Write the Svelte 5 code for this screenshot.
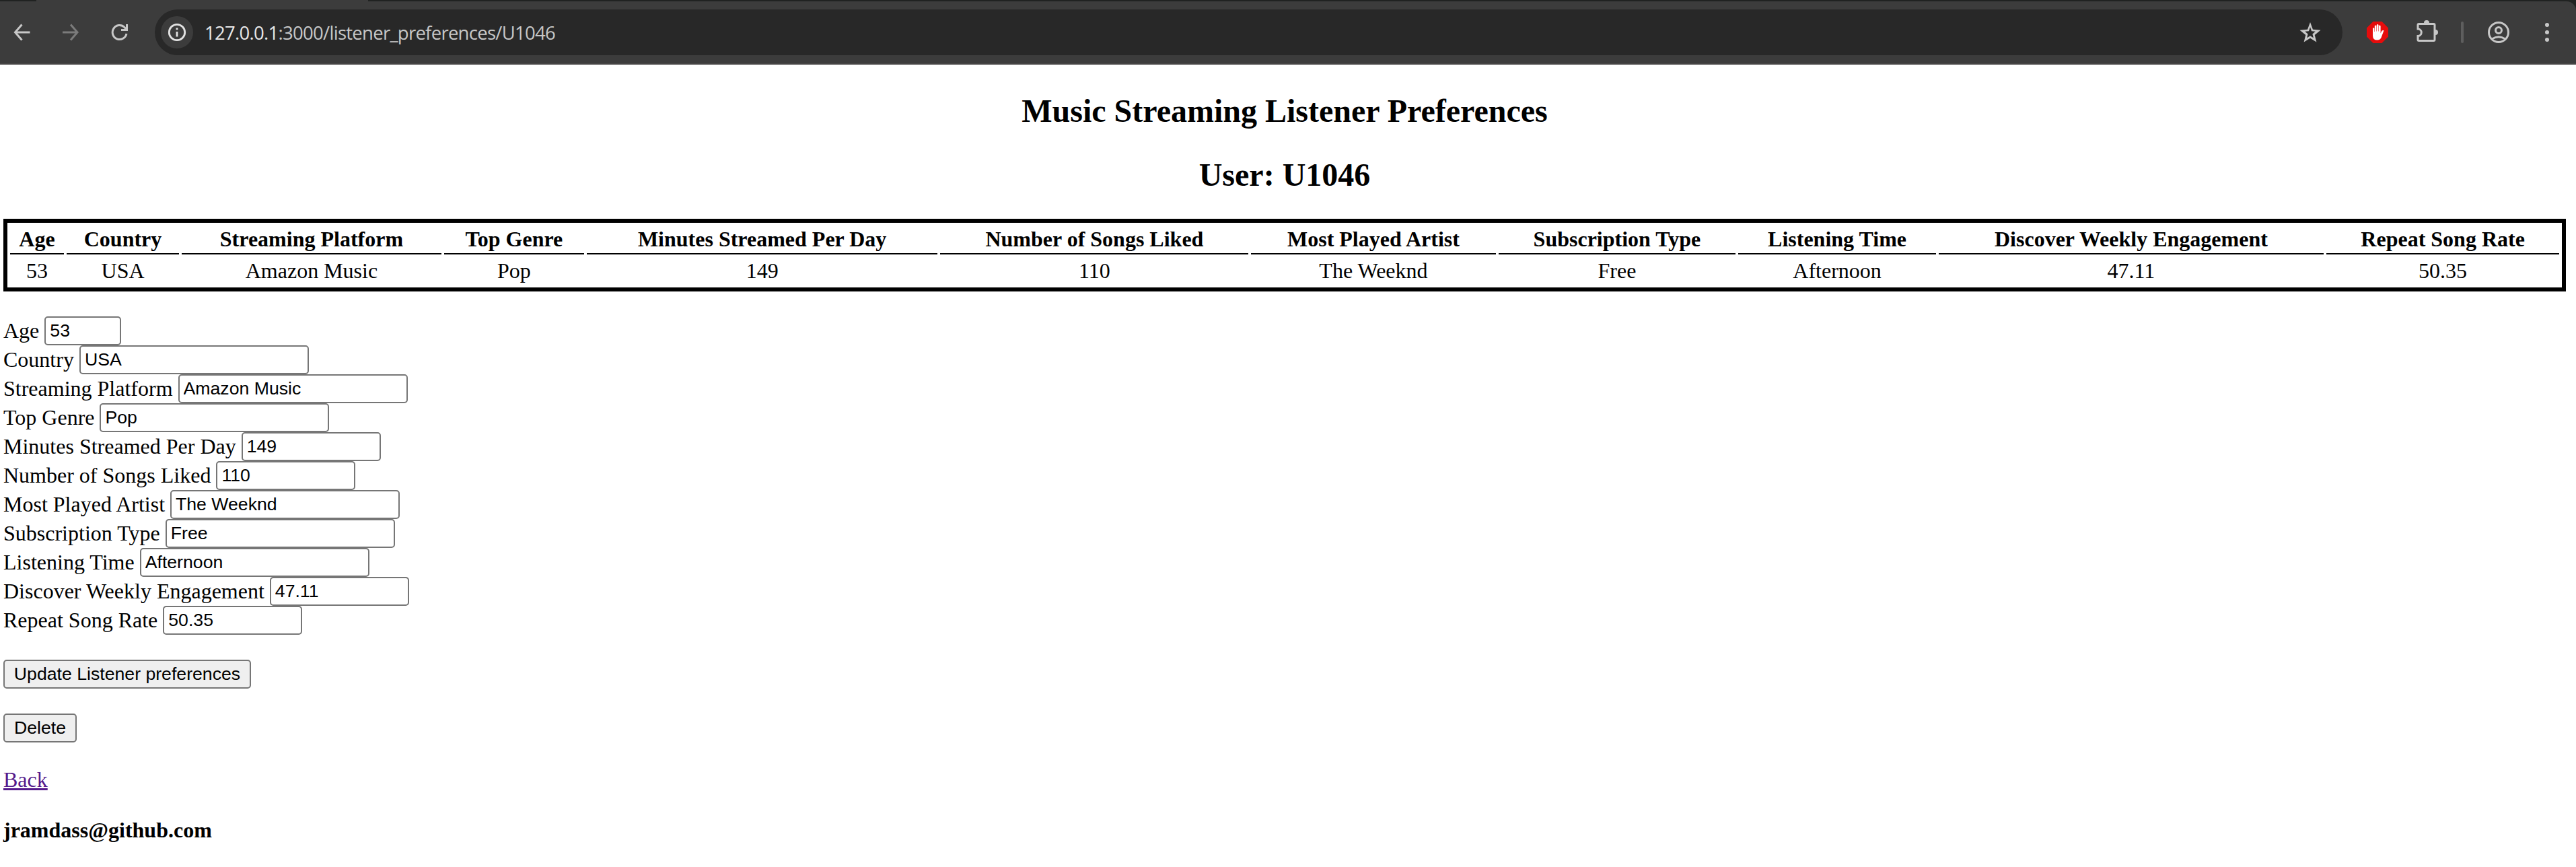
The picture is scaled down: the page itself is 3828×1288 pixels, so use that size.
<script lang="ts">
  const columns = [
    { label: 'Age', value: '53', kind: 'short' },
    { label: 'Country', value: 'USA', kind: 'text' },
    { label: 'Streaming Platform', value: 'Amazon Music', kind: 'text' },
    { label: 'Top Genre', value: 'Pop', kind: 'text' },
    { label: 'Minutes Streamed Per Day', value: '149', kind: 'number' },
    { label: 'Number of Songs Liked', value: '110', kind: 'number' },
    { label: 'Most Played Artist', value: 'The Weeknd', kind: 'text' },
    { label: 'Subscription Type', value: 'Free', kind: 'text' },
    { label: 'Listening Time', value: 'Afternoon', kind: 'text' },
    { label: 'Discover Weekly Engagement', value: '47.11', kind: 'number' },
    { label: 'Repeat Song Rate', value: '50.35', kind: 'number' },
  ];
</script>

<div class="strip">
  <div class="tab"></div>
  <header class="toolbar">
    <nav class="nav">
      <svg class="icon" viewBox="0 0 32 32"><path d="M28.500 16H6.500M16.500 4.500L6.500 16L16.500 27.500" /></svg>
      <svg class="icon dim" viewBox="0 0 32 32"><path d="M5 16H27M17 4.500L27 16L17 27.500" /></svg>
      <svg class="icon" viewBox="0 0 32 32"><path d="M28 18A10.500 10.500 0 1 1 25 8.500L28 12M28.500 4V12.500H20" /></svg>
    </nav>
    <div class="omnibox">
      <span class="info">
        <svg viewBox="0 0 32 32"><circle cx="16" cy="16" r="11.700" /><path d="M16 15V22.500M16 9.500V12.300" /></svg>
      </span>
      <span class="url"><b>127.0.0.1</b>:3000/listener_preferences/U1046</span>
      <svg class="star" viewBox="0 0 32 32"><path fill-rule="evenodd" d="M16 0L20.100 11L32 12L22.900 19.600L25.700 30.500L16 24.400L6.300 30.500L9.100 19.600L0 12L11.900 11ZM16 7.500L13.900 13.600L8 14.100L12.500 18L11 24L16 20.800L21 24L19.500 18L24 14.100L18.100 13.600Z" /></svg>
    </div>
    <svg class="ext" viewBox="0 0 32 32">
      <path fill="#e60c0c" d="M9.500 0H22.500L32 9.500V22.500L22.500 32H9.500L0 22.500V9.500Z" />
      <path fill="#fff" d="M9 10.200Q10.200 8.400 11.300 10.200V15H11.800V6.500Q13 4.600 14.300 6.500V14.500H14.800V5Q16.200 3 17.500 5V14.500H18V6.500Q19.300 4.600 20.600 6.500V17.500L22.300 14Q23.800 12.300 25.500 13.300L21.500 24Q19.800 27.600 15.500 27.600Q9 27.600 9 21Z" />
    </svg>
    <svg class="puzzle" viewBox="0 0 34 34">
      <path class="line" d="M4.500 5.500H26.500Q28 5.500 28 7V29Q28 30.500 26.500 30.500H4.500Q3 30.500 3 29V23.500A4.800 4.800 0 0 0 3 13V7Q3 5.500 4.500 5.500Z" />
      <path class="solid" d="M12 4A4 4 0 0 1 20 4ZM29 14A4 4 0 0 1 29 22Z" />
    </svg>
    <span class="rule"></span>
    <svg class="profile" viewBox="0 0 32 32"><circle cx="16" cy="16" r="14.500" /><circle cx="16" cy="13" r="4.500" /><path d="M6 26Q16 19.500 26 26" /></svg>
    <svg class="menu" viewBox="0 0 6 28"><circle cx="3" cy="3" r="3" /><circle cx="3" cy="14" r="3" /><circle cx="3" cy="25" r="3" /></svg>
  </header>
</div>

<main>
  <h1>Music Streaming Listener Preferences</h1>
  <h1>User: U1046</h1>

  <table>
    <thead>
      <tr>{#each columns as c}<th>{c.label}</th>{/each}</tr>
    </thead>
    <tbody>
      <tr>{#each columns as c}<td>{c.value}</td>{/each}</tr>
    </tbody>
  </table>

  <form onsubmit={(e) => e.preventDefault()}>
    {#each columns as c}
      <label class="field"><span>{c.label}</span><input class={c.kind} type="text" value={c.value} /></label>
    {/each}
    <button type="submit" class="update">Update Listener preferences</button>
    <button type="button" class="delete">Delete</button>
  </form>

  <a href="#back">Back</a>
  <p class="owner">jramdass@github.com</p>
</main>

<style>
  :global(body) {
    background: #fff;
    overflow: hidden;
  }
  .strip {
    height: 96px;
    background: #202221;
  }
  .tab {
    width: 493px;
    height: 2px;
    margin-left: 54px;
    background: #3c3c3c;
  }
  .toolbar {
    height: 94px;
    box-sizing: border-box;
    display: flex;
    align-items: center;
    padding: 0 40px 0 16px;
    background: #3c3c3c;
    border-bottom: 2px solid #474545;
    border-radius: 0 14px 0 0;
  }
  svg {
    display: block;
    flex: none;
    fill: none;
    stroke: #c7c7c7;
    stroke-width: 3;
  }
  .nav {
    display: flex;
    gap: 40px;
    margin-right: 38px;
  }
  .icon {
    width: 32px;
    height: 32px;
  }
  .dim {
    stroke: #7b7b7b;
  }
  .omnibox {
    flex: 1;
    height: 68px;
    box-sizing: border-box;
    display: flex;
    align-items: center;
    padding: 0 32px 0 9px;
    border-radius: 34px;
    background: #282828;
  }
  .info {
    width: 48px;
    height: 48px;
    display: grid;
    place-items: center;
    border-radius: 50%;
    background: #3c3c3c;
    margin-right: 17px;
  }
  .info svg {
    width: 32px;
    height: 32px;
    stroke: #e3e3e3;
    stroke-width: 2.800;
  }
  .url {
    flex: 1;
    font: 27.500px 'Open Sans', 'Noto Sans', sans-serif;
    letter-spacing: -0.720px;
    color: #c7c7c7;
    white-space: nowrap;
  }
  .url b {
    font-weight: 400;
    color: #e8e8e8;
  }
  .star {
    width: 32px;
    height: 31px;
    fill: #c7c7c7;
    stroke: none;
  }
  .ext {
    width: 32px;
    height: 32px;
    margin-left: 36px;
    stroke: none;
  }
  .puzzle {
    width: 34px;
    height: 34px;
    margin: -3px 0 0 41px;
  }
  .puzzle .solid {
    fill: #c7c7c7;
    stroke: none;
  }
  .rule {
    width: 4px;
    height: 32px;
    border-radius: 2px;
    background: #5e5e5e;
    margin: 0 36px 0 33px;
  }
  .profile {
    width: 32px;
    height: 32px;
    margin-right: 53px;
  }
  .menu {
    width: 6px;
    height: 28px;
    fill: #c7c7c7;
    stroke: none;
  }
  main {
    padding: 1px 15px 0 5px;
    font: 32px/37px 'Liberation Serif', serif;
    color: #000;
  }
  h1 {
    margin: 0;
    padding-top: 40px;
    font-size: 48px;
    line-height: 55px;
    text-align: center;
  }
  table {
    width: 100%;
    margin-top: 38px;
    border: 6px solid #000;
    border-spacing: 4px;
    text-align: center;
  }
  th,
  td {
    padding: 2px;
  }
  th {
    border-bottom: 2px solid #000;
  }
  form {
    display: flex;
    flex-direction: column;
    align-items: flex-start;
    margin-top: 37px;
  }
  .field {
    display: flex;
    align-items: center;
    gap: 8px;
    height: 43px;
    white-space: nowrap;
  }
  input,
  button {
    box-sizing: border-box;
    height: 43px;
    margin: 0;
    border: 2px solid #767676;
    border-radius: 5px;
    font: 26.667px 'Liberation Sans', sans-serif;
    color: #000;
  }
  input {
    padding: 2px 4px 2px 6px;
    background: #fff;
  }
  .short {
    width: 114px;
  }
  .text {
    width: 341px;
  }
  .number {
    width: 207px;
  }
  button {
    padding: 0 0 1px;
    background: #efefef;
  }
  .update {
    width: 368px;
    margin-top: 37px;
  }
  .delete {
    width: 109px;
    margin-top: 37px;
  }
  a {
    display: inline-block;
    margin-top: 37px;
    color: #551a8b;
    text-decoration: underline;
    text-decoration-thickness: 3px;
  }
  .owner {
    margin: 38px 0 0;
    font-weight: 700;
  }
</style>
